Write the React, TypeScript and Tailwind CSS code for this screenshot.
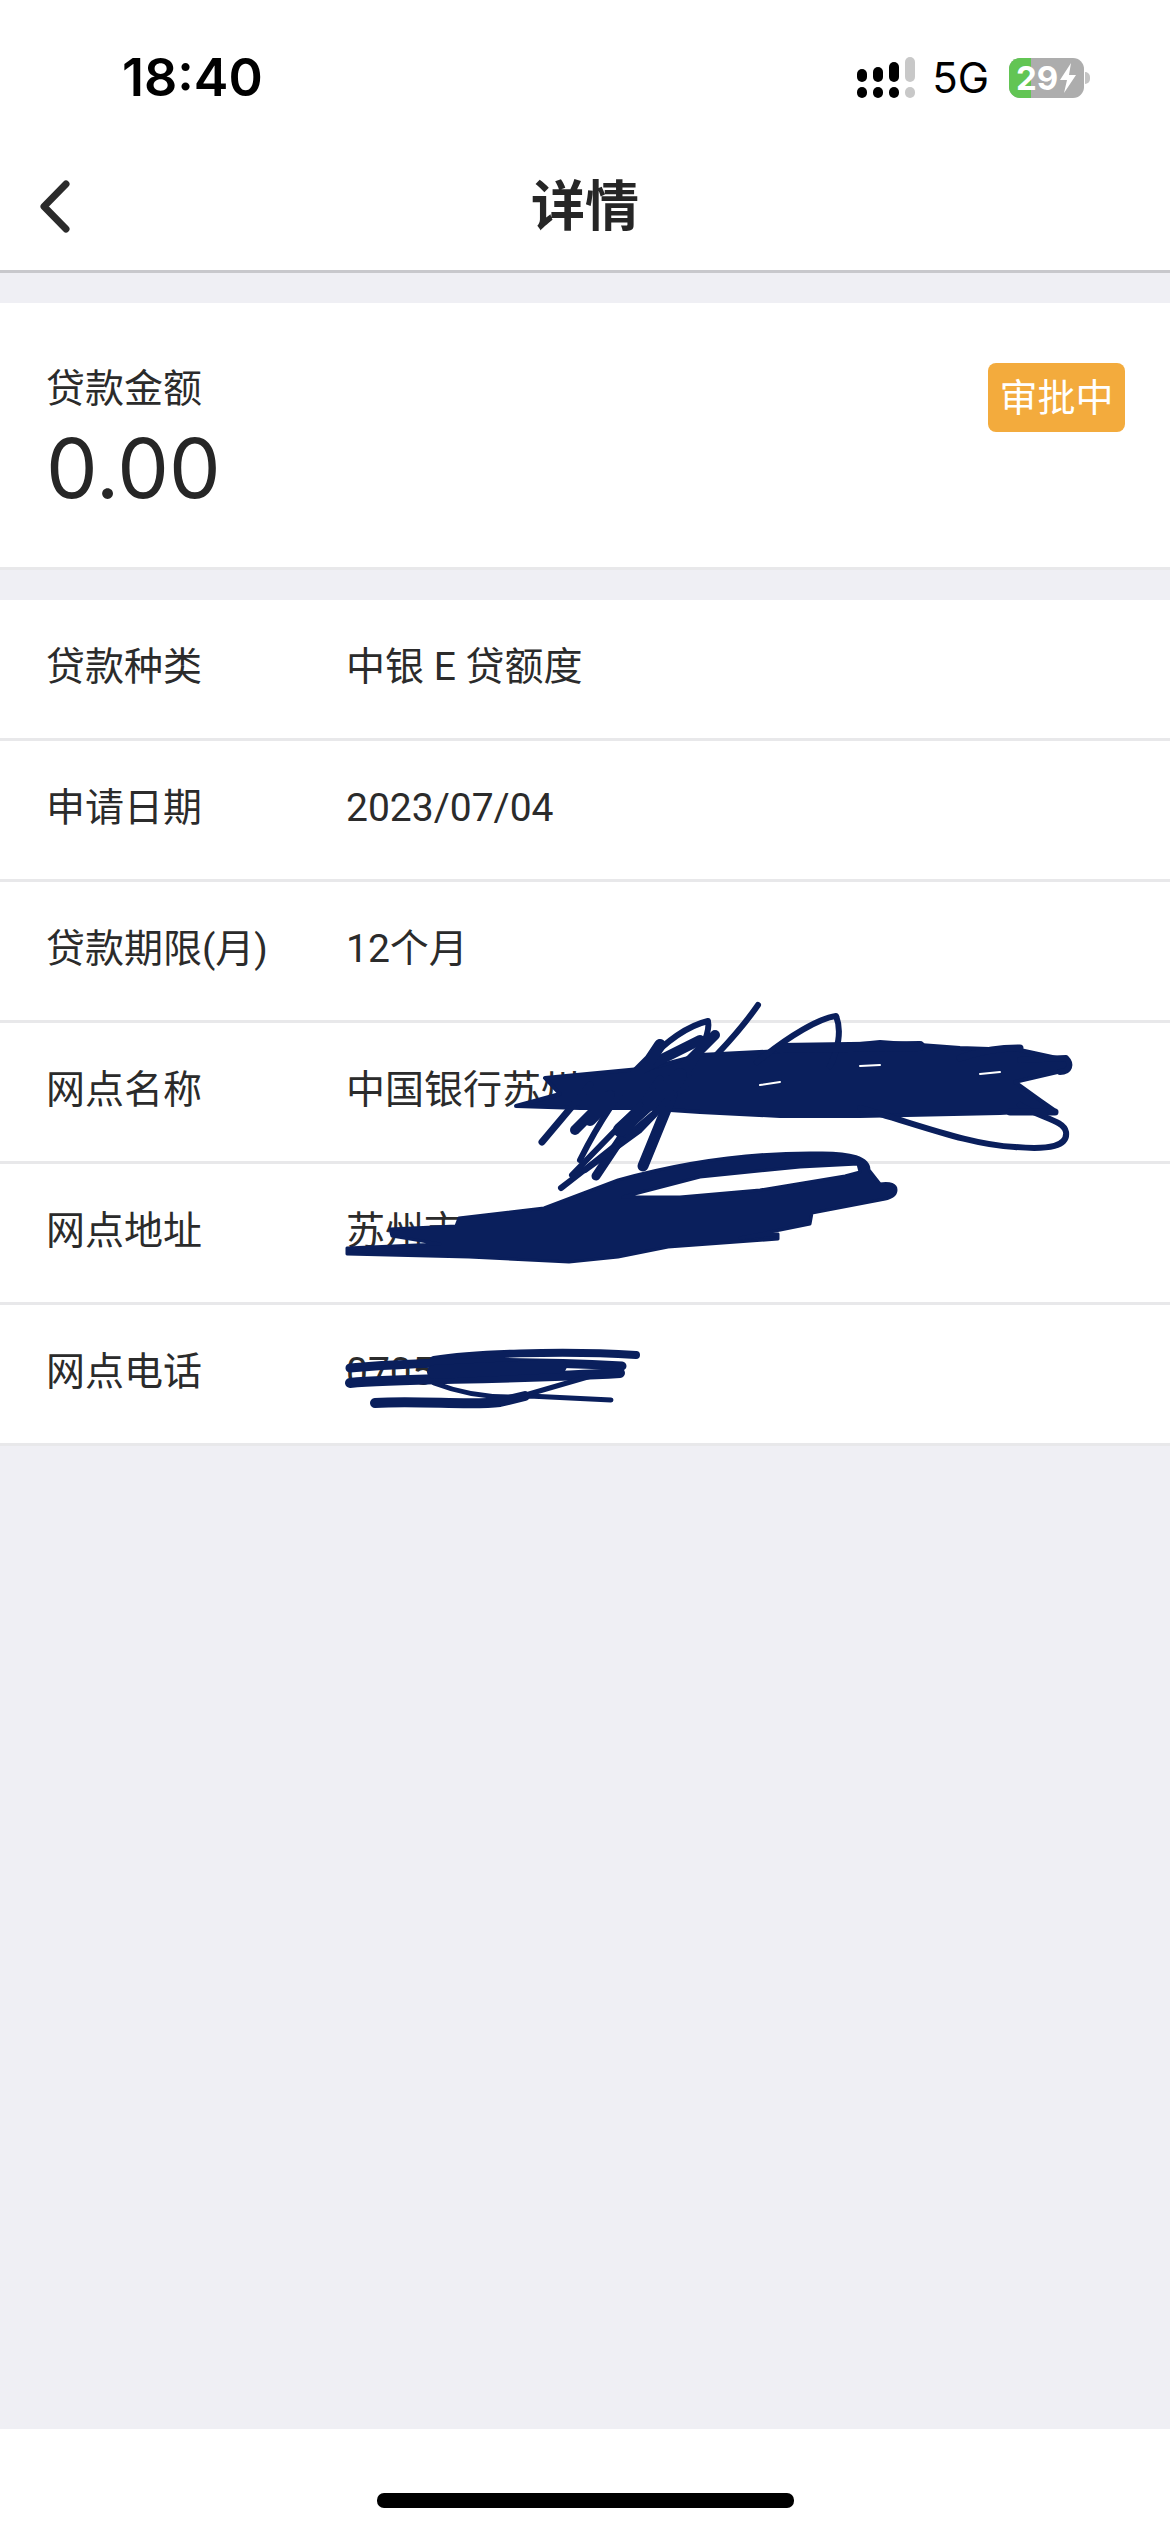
const rows = [
  { label: '贷款种类', value: '中银 E 贷额度' },
  { label: '申请日期', value: '2023/07/04' },
  { label: '贷款期限(月)', value: '12个月' },
  { label: '网点名称', value: '中国银行苏州' },
  { label: '网点地址', value: '苏州市' },
  { label: '网点电话', value: '0705' },
];

const StatusBar = () => (
  <div className="h-[110px] pt-[46px] pl-[122px] pr-[80px] flex items-center justify-between shrink-0 font-['Inter',sans-serif]">
    <span className="text-[52px] font-semibold text-black leading-none">18:40</span>
    <div className="flex items-center">
      {/* signal dots */}
      <svg width="58" height="42" viewBox="0 0 58 42" className="mr-[17px]">
        <rect x="0" y="12" width="10" height="13" rx="5" fill="#000" />
        <rect x="16" y="10" width="10" height="15" rx="5" fill="#000" />
        <rect x="32" y="5" width="10" height="20" rx="5" fill="#000" />
        <rect x="48" y="0" width="10" height="25" rx="5" fill="#c8c8c8" />
        <rect x="0" y="30" width="10" height="11" rx="5" fill="#000" />
        <rect x="16" y="30" width="10" height="11" rx="5" fill="#000" />
        <rect x="32" y="30" width="10" height="11" rx="5" fill="#000" />
        <rect x="48" y="30" width="10" height="11" rx="5" fill="#c8c8c8" />
      </svg>
      <span className="text-[42px] text-black leading-none mr-[20px]">5G</span>
      {/* battery */}
      <div className="relative w-[75px] h-[40px] rounded-[11px] bg-[#adadad] flex items-center">
        <div className="absolute left-0 top-0 bottom-0 w-[22px] rounded-l-[11px] bg-[#62c554]" />
        <span className="relative pl-[7px] text-[33px] font-bold text-white leading-none">29</span>
        <svg width="20" height="32" viewBox="0 0 20 32" className="relative">
          <path d="M13 1 2 18h7l-3 13L18 13h-7z" fill="#fff" />
        </svg>
      </div>
      <div className="w-[5px] h-[12px] ml-[1px] rounded-r-full bg-[#c4c4c4]" />
    </div>
  </div>
);

// the pen marks drawn over the private values
const Scribbles = () => (
  <svg
    className="absolute left-0 top-0 pointer-events-none"
    width="1170"
    height="1443"
    viewBox="0 0 1170 1443"
    fill="none"
    stroke="#0a1f5c"
    strokeLinecap="round"
    strokeLinejoin="round"
  >
    {/* name row: solid core */}
    <path
      fill="#0a1f5c"
      strokeWidth="4"
      d="M516 1106 L560 1094 L545 1078 L650 1068 L700 1055 L800 1050 L880 1042 L960 1048 L1020 1050 L1066 1060 L1066 1070 L1015 1082 L1040 1100 L1054 1110 L1000 1113 L860 1116 L780 1116 L700 1112 L640 1108 L580 1108 Z"
    />
    {/* name row: spikes and loops */}
    <g strokeWidth="7">
      <path d="M758 1005 C720 1060 650 1120 561 1188" strokeWidth="6" />
      <path d="M542 1142 L590 1085" />
      <path d="M596 1176 L660 1080" strokeWidth="9" />
      <path d="M643 1166 L672 1095" strokeWidth="11" />
      <path d="M580 1160 C620 1080 670 1030 708 1021 C712 1040 680 1090 640 1130 L585 1170" strokeWidth="6" />
      <path d="M640 1070 L700 1040" strokeWidth="10" />
      <path d="M660 1090 L715 1035" strokeWidth="10" />
      <path d="M620 1130 L680 1075" strokeWidth="14" />
      <path d="M590 1120 L650 1060 L660 1045" strokeWidth="12" />
      <path d="M575 1130 L610 1095" strokeWidth="10" />
      <path d="M572 1175 L640 1105" strokeWidth="6" />
      <path d="M757 1062 C790 1035 820 1018 836 1016 C842 1030 838 1050 830 1066" strokeWidth="6" />
      <path d="M860 1108 C920 1125 970 1145 1015 1147 C1050 1150 1068 1146 1066 1132 C1064 1120 1040 1118 1020 1105" strokeWidth="6" />
      <path d="M1010 1112 L1055 1112" strokeWidth="7" />
      <path d="M780 1048 L920 1046" strokeWidth="10" />
      <path d="M960 1058 C985 1050 1000 1048 1020 1048" strokeWidth="7" />
      <path d="M1020 1060 L1066 1058 C1072 1064 1070 1072 1060 1072" strokeWidth="6" />
    </g>
    {/* small gaps left by the pen */}
    <g stroke="#ffffff" strokeWidth="2">
      <path d="M860 1066 L880 1065" />
      <path d="M760 1085 L780 1082" />
      <path d="M980 1074 L1000 1072" />
    </g>
    {/* address row */}
    <path
      fill="#0a1f5c"
      fillRule="evenodd"
      strokeWidth="3"
      d="M347 1248 L440 1244 L392 1236 L390 1229 L456 1226 L459 1218 L544 1208 L618 1180 Q718 1152 817 1153 Q869 1152 869 1170 L880 1184 Q896 1182 896 1190 Q896 1198 880 1200 L812 1213 L810 1224 L740 1238 L778 1234 L778 1239 L668 1247 L618 1257 L569 1262 L469 1257 L347 1254 Z M623 1197 L700 1177 L800 1167 L858 1164 L860 1172 L845 1176 L760 1190 L680 1197 Z"
    />
    {/* phone row */}
    <g>
      <path d="M434 1360 C470 1354 560 1350 636 1355" strokeWidth="8" />
      <path d="M350 1368 C440 1360 540 1362 622 1366" strokeWidth="9" />
      <path d="M350 1383 C400 1378 500 1380 620 1373" strokeWidth="10" />
      <path d="M434 1372 L560 1366" strokeWidth="14" />
      <path d="M434 1383 C465 1395 495 1399 529 1396 L611 1400" strokeWidth="5" />
      <path d="M529 1394 L598 1374" strokeWidth="5" />
      <path d="M375 1403 C420 1400 470 1406 500 1402 L525 1396" strokeWidth="10" />
    </g>
  </svg>
);

const App = () => {
  return (
    <div className="relative w-[1170px] h-[2532px] bg-[#efeff4] flex flex-col font-['Roboto','Noto_Sans_CJK_SC',sans-serif]">
      <div className="bg-white shrink-0">
        <StatusBar />
        <div className="relative h-[163px] pt-[36px] flex items-center justify-center border-b-[3px] border-[#c8c8cc]">
          <svg className="absolute left-[38px] top-[70px]" width="34" height="53" viewBox="0 0 34 53" fill="none">
            <path d="M28 4 6 26.5 28 49" stroke="#2b2b2b" strokeWidth="7" strokeLinecap="round" strokeLinejoin="round" />
          </svg>
          <span className="text-[54px] font-bold text-[#262626] leading-none">详情</span>
        </div>
      </div>

      <div className="mt-[30px] bg-white h-[267px] border-b-[3px] border-[#e8e8ea] pl-[46px] pr-[45px] flex justify-between items-start">
        <div className="pt-[64px]">
          <div className="text-[39px] text-[#2b2b2b] leading-[44px]">贷款金额</div>
          <div className="text-[82px] font-['Inter',sans-serif] font-normal text-[#262626] leading-none mt-[17px]">0.00</div>
        </div>
        <div className="mt-[60px] w-[137px] h-[69px] rounded-[8px] bg-[#f3ab3d] text-white text-[38px] leading-none flex items-center justify-center">
          审批中
        </div>
      </div>

      <div className="mt-[30px] bg-white">
        {rows.map((row) => (
          <div key={row.label} className="h-[141px] pb-[3px] flex items-center border-b-[3px] border-[#e8e8ea] pl-[46px]">
            <span className="w-[300px] text-[39px] text-[#2b2b2b] leading-none">{row.label}</span>
            <span className="text-[39px] text-[#2b2b2b] leading-none">{row.value}</span>
          </div>
        ))}
      </div>

      <div className="mt-auto h-[103px] bg-white flex justify-center items-end pb-[24px]">
        <div className="w-[417px] h-[15px] rounded-[7px] bg-black" />
      </div>

      <Scribbles />
    </div>
  );
};

export default App;
